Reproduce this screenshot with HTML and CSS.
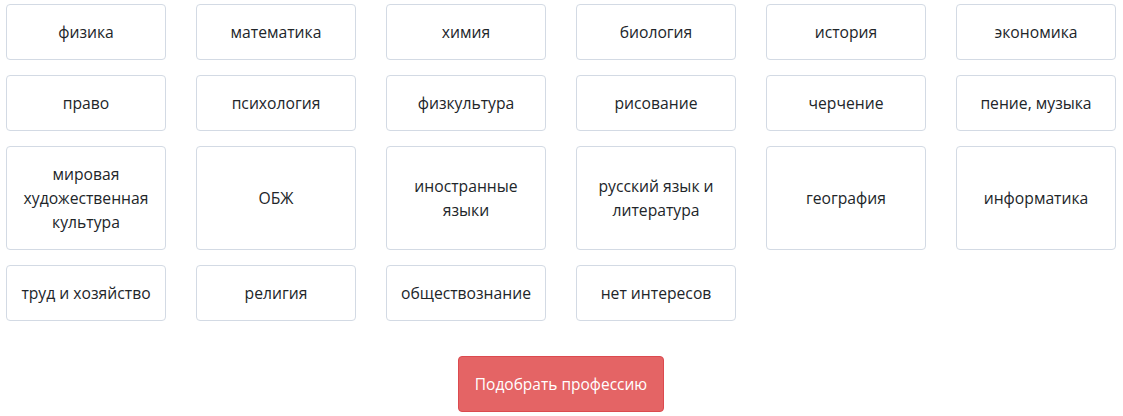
FILE: index.html
```html
<!DOCTYPE html>
<html lang="ru">
  <head>
    <meta charset="UTF-8" />
    <meta name="viewport" content="width=device-width, initial-scale=1" />
    <title>Подбор профессии</title>
    <link rel="stylesheet" href="styles.css">
  </head>
  <body>
    <form class="subjects">
      <div class="grid">
        <label class="subject">физика</label>
        <label class="subject">математика</label>
        <label class="subject">химия</label>
        <label class="subject">биология</label>
        <label class="subject">история</label>
        <label class="subject">экономика</label>
        <label class="subject">право</label>
        <label class="subject">психология</label>
        <label class="subject">физкультура</label>
        <label class="subject">рисование</label>
        <label class="subject">черчение</label>
        <label class="subject">пение, музыка</label>
        <label class="subject">мировая художественная культура</label>
        <label class="subject">ОБЖ</label>
        <label class="subject">иностранные языки</label>
        <label class="subject">русский язык и литература</label>
        <label class="subject">география</label>
        <label class="subject">информатика</label>
        <label class="subject">труд и хозяйство</label>
        <label class="subject">религия</label>
        <label class="subject">обществознание</label>
        <label class="subject">нет интересов</label>
      </div>
      <div class="actions">
        <button type="submit" class="btn">Подобрать профессию</button>
      </div>
    </form>
  </body>
</html>
```

FILE: styles.css
```css
body {
  margin: 0;
  font-family: "Open Sans", sans-serif;
  color: #212529;
  background: #fff;
}
.subjects {
  width: 1110px;
  padding: 4px 0 0 6px;
}
.grid {
  display: grid;
  grid-template-columns: repeat(6, 160px);
  column-gap: 30px;
  row-gap: 15px;
}
.subject {
  display: flex;
  align-items: center;
  justify-content: center;
  text-align: center;
  padding: 15px 8px;
  font-size: 15.7px;
  line-height: 24px;
  border: 1px solid #d3dae4;
  border-radius: 4px;
  background: #fff;
}
.actions {
  display: flex;
  justify-content: center;
  margin-top: 35px;
}
.btn {
  font-family: "Open Sans", sans-serif;
  font-size: 15.5px;
  line-height: 24px;
  white-space: nowrap;
  color: #fff;
  background: #e46465;
  border: 1px solid #dc4a4f;
  border-radius: 4px;
  padding: 15px 16px;
}
```
